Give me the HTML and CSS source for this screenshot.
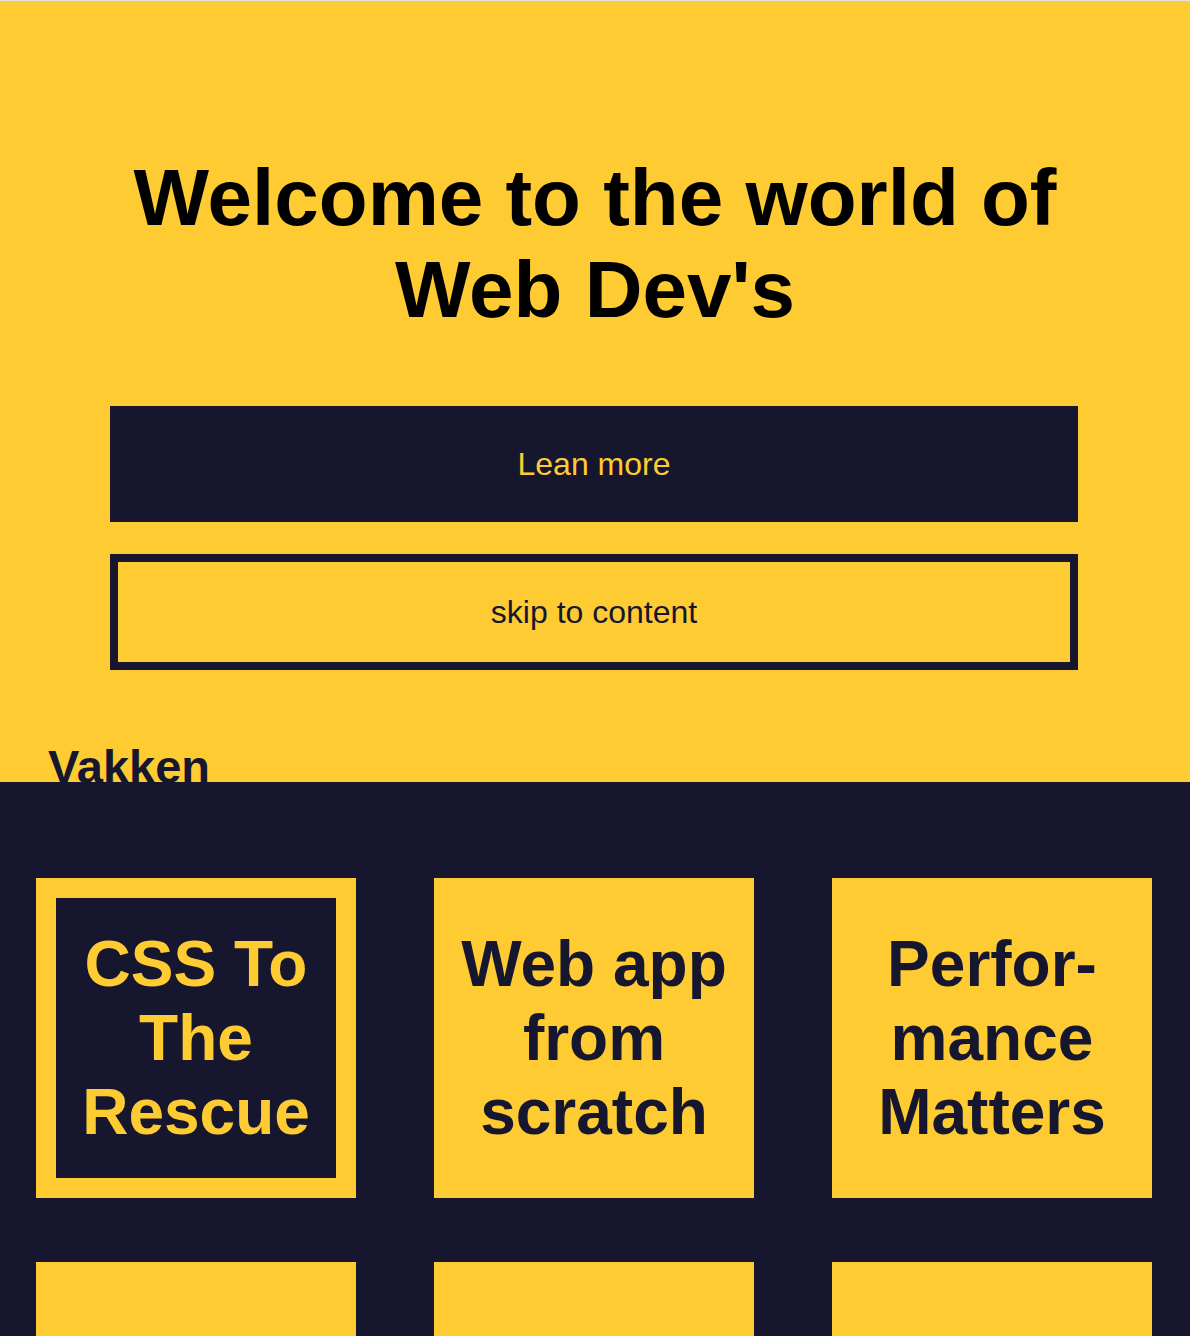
FILE: index.html
```html
<!DOCTYPE html>
<html lang="nl">
<head>
<meta charset="utf-8">
<title>Web Dev's</title>
<link rel="stylesheet" href="styles.css">
</head>
<body>
<header class="hero">
  <h1 class="hero-title">Welcome to the world of Web Dev's</h1>
  <div class="hero-actions">
    <a class="btn btn-solid" href="#vakken">Lean more</a>
    <a class="btn btn-outline" href="#vakken">skip to content</a>
  </div>
  <h2 class="section-title" id="vakken">Vakken</h2>
</header>
<main class="courses">
  <ul class="course-grid">
    <li class="course course-active"><span class="course-name">CSS To The Rescue</span></li>
    <li class="course"><span class="course-name">Web app from scratch</span></li>
    <li class="course"><span class="course-name">Perfor&shy;mance Matters</span></li>
    <li class="course"></li>
    <li class="course"></li>
    <li class="course"></li>
  </ul>
</main>
</body>
</html>
```
FILE: styles.css
```css
* {
  box-sizing: border-box;
}

html, body {
  margin: 0;
  padding: 0;
}

body {
  font-family: "Liberation Sans", Arial, Helvetica, sans-serif;
  background: #16172e;
  color: #16172e;
  border-top: 1px solid #e2e2e2;
}

.hero {
  background: #fecb33;
  padding: 151px 0 0;
  overflow: hidden;
}

.hero-title {
  margin: 0 auto;
  width: 968px;
  text-align: center;
  font-size: 80px;
  font-weight: 700;
  line-height: normal;
  color: #000;
}

.hero-actions {
  display: flex;
  flex-direction: column;
  gap: 32px;
  margin: 70px 112px 0 110px;
}

.btn {
  display: block;
  text-align: center;
  text-decoration: none;
  font-size: 32px;
  line-height: normal;
}

.btn-solid {
  background: #16172e;
  color: #fecb33;
  padding: 39.6px 0;
}

.btn-outline {
  background: #fecb33;
  color: #16172e;
  border: 8px solid #16172e;
  padding: 31.6px 0;
}

.section-title {
  margin: 69px 0 -12.6px 48px;
  font-size: 47px;
  font-weight: 700;
  line-height: normal;
  color: #16172e;
}

.courses {
  padding: 96px 0 0 36px;
}

.course-grid {
  list-style: none;
  margin: 0;
  padding: 0;
  display: grid;
  grid-template-columns: repeat(3, 320px);
  column-gap: 78px;
  row-gap: 64px;
}

.course {
  height: 320px;
  background: #fecb33;
  display: flex;
  align-items: center;
  justify-content: center;
  padding: 20px;
  text-align: center;
}

.course-name {
  font-size: 64px;
  font-weight: 700;
  line-height: normal;
  color: #16172e;
  hyphens: manual;
}

.course-active {
  border: 20px solid #fecb33;
  background: #16172e;
  padding: 0;
}

.course-active .course-name {
  color: #fecb33;
}
```
